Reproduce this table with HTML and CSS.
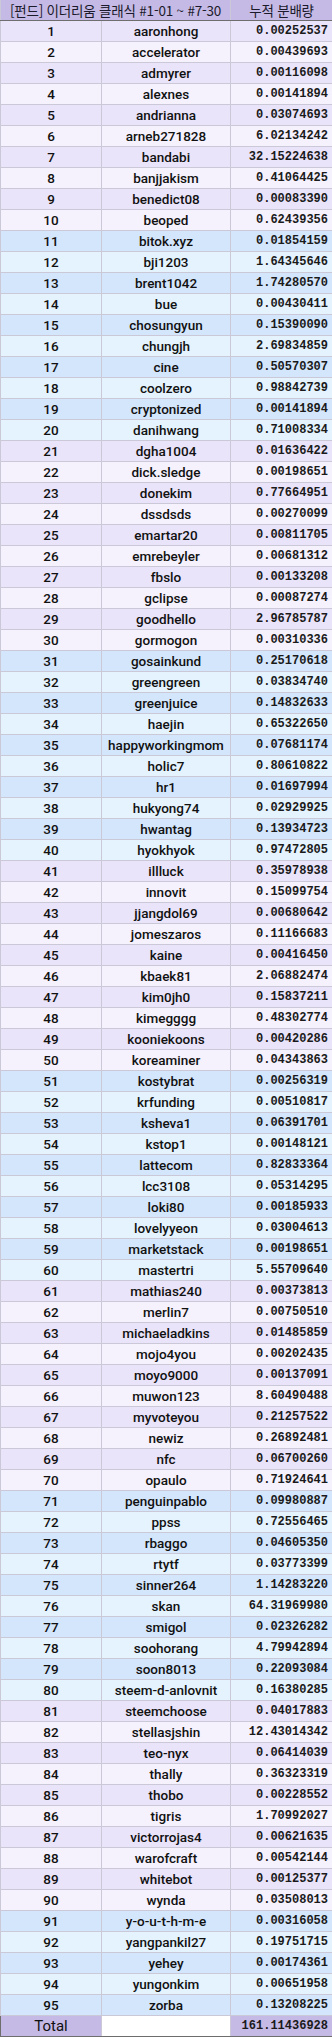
FILE: index.html
```html
<!DOCTYPE html>
<html lang="ko">
<head>
<meta charset="utf-8">
<title>이더리움 클래식 분배량</title>
<link rel="stylesheet" href="styles.css">
</head>
<body>
<table class="dist">
<colgroup><col class="c-no"><col class="c-name"><col class="c-amt"></colgroup>
<thead>
<tr class="head"><th colspan="2">[펀드] 이더리움 클래식 #1-01 ~ #7-30</th><th>누적 분배량</th></tr>
</thead>
<tbody class="purple">
<tr><td class="no">1</td><td class="name">aaronhong</td><td class="amt">0.00252537</td></tr>
<tr><td class="no">2</td><td class="name">accelerator</td><td class="amt">0.00439693</td></tr>
<tr><td class="no">3</td><td class="name">admyrer</td><td class="amt">0.00116098</td></tr>
<tr><td class="no">4</td><td class="name">alexnes</td><td class="amt">0.00141894</td></tr>
<tr><td class="no">5</td><td class="name">andrianna</td><td class="amt">0.03074693</td></tr>
<tr><td class="no">6</td><td class="name">arneb271828</td><td class="amt">6.02134242</td></tr>
<tr><td class="no">7</td><td class="name">bandabi</td><td class="amt">32.15224638</td></tr>
<tr><td class="no">8</td><td class="name">banjjakism</td><td class="amt">0.41064425</td></tr>
<tr><td class="no">9</td><td class="name">benedict08</td><td class="amt">0.00083390</td></tr>
<tr><td class="no">10</td><td class="name">beoped</td><td class="amt">0.62439356</td></tr>
</tbody>
<tbody class="blue">
<tr><td class="no">11</td><td class="name">bitok.xyz</td><td class="amt">0.01854159</td></tr>
<tr><td class="no">12</td><td class="name">bji1203</td><td class="amt">1.64345646</td></tr>
<tr><td class="no">13</td><td class="name">brent1042</td><td class="amt">1.74280570</td></tr>
<tr><td class="no">14</td><td class="name">bue</td><td class="amt">0.00430411</td></tr>
<tr><td class="no">15</td><td class="name">chosungyun</td><td class="amt">0.15390090</td></tr>
<tr><td class="no">16</td><td class="name">chungjh</td><td class="amt">2.69834859</td></tr>
<tr><td class="no">17</td><td class="name">cine</td><td class="amt">0.50570307</td></tr>
<tr><td class="no">18</td><td class="name">coolzero</td><td class="amt">0.98842739</td></tr>
<tr><td class="no">19</td><td class="name">cryptonized</td><td class="amt">0.00141894</td></tr>
<tr><td class="no">20</td><td class="name">danihwang</td><td class="amt">0.71008334</td></tr>
</tbody>
<tbody class="purple">
<tr><td class="no">21</td><td class="name">dgha1004</td><td class="amt">0.01636422</td></tr>
<tr><td class="no">22</td><td class="name">dick.sledge</td><td class="amt">0.00198651</td></tr>
<tr><td class="no">23</td><td class="name">donekim</td><td class="amt">0.77664951</td></tr>
<tr><td class="no">24</td><td class="name">dssdsds</td><td class="amt">0.00270099</td></tr>
<tr><td class="no">25</td><td class="name">emartar20</td><td class="amt">0.00811705</td></tr>
<tr><td class="no">26</td><td class="name">emrebeyler</td><td class="amt">0.00681312</td></tr>
<tr><td class="no">27</td><td class="name">fbslo</td><td class="amt">0.00133208</td></tr>
<tr><td class="no">28</td><td class="name">gclipse</td><td class="amt">0.00087274</td></tr>
<tr><td class="no">29</td><td class="name">goodhello</td><td class="amt">2.96785787</td></tr>
<tr><td class="no">30</td><td class="name">gormogon</td><td class="amt">0.00310336</td></tr>
</tbody>
<tbody class="blue">
<tr><td class="no">31</td><td class="name">gosainkund</td><td class="amt">0.25170618</td></tr>
<tr><td class="no">32</td><td class="name">greengreen</td><td class="amt">0.03834740</td></tr>
<tr><td class="no">33</td><td class="name">greenjuice</td><td class="amt">0.14832633</td></tr>
<tr><td class="no">34</td><td class="name">haejin</td><td class="amt">0.65322650</td></tr>
<tr><td class="no">35</td><td class="name">happyworkingmom</td><td class="amt">0.07681174</td></tr>
<tr><td class="no">36</td><td class="name">holic7</td><td class="amt">0.80610822</td></tr>
<tr><td class="no">37</td><td class="name">hr1</td><td class="amt">0.01697994</td></tr>
<tr><td class="no">38</td><td class="name">hukyong74</td><td class="amt">0.02929925</td></tr>
<tr><td class="no">39</td><td class="name">hwantag</td><td class="amt">0.13934723</td></tr>
<tr><td class="no">40</td><td class="name">hyokhyok</td><td class="amt">0.97472805</td></tr>
</tbody>
<tbody class="purple">
<tr><td class="no">41</td><td class="name">illluck</td><td class="amt">0.35978938</td></tr>
<tr><td class="no">42</td><td class="name">innovit</td><td class="amt">0.15099754</td></tr>
<tr><td class="no">43</td><td class="name">jjangdol69</td><td class="amt">0.00680642</td></tr>
<tr><td class="no">44</td><td class="name">jomeszaros</td><td class="amt">0.11166683</td></tr>
<tr><td class="no">45</td><td class="name">kaine</td><td class="amt">0.00416450</td></tr>
<tr><td class="no">46</td><td class="name">kbaek81</td><td class="amt">2.06882474</td></tr>
<tr><td class="no">47</td><td class="name">kim0jh0</td><td class="amt">0.15837211</td></tr>
<tr><td class="no">48</td><td class="name">kimegggg</td><td class="amt">0.48302774</td></tr>
<tr><td class="no">49</td><td class="name">kooniekoons</td><td class="amt">0.00420286</td></tr>
<tr><td class="no">50</td><td class="name">koreaminer</td><td class="amt">0.04343863</td></tr>
</tbody>
<tbody class="blue">
<tr><td class="no">51</td><td class="name">kostybrat</td><td class="amt">0.00256319</td></tr>
<tr><td class="no">52</td><td class="name">krfunding</td><td class="amt">0.00510817</td></tr>
<tr><td class="no">53</td><td class="name">ksheva1</td><td class="amt">0.06391701</td></tr>
<tr><td class="no">54</td><td class="name">kstop1</td><td class="amt">0.00148121</td></tr>
<tr><td class="no">55</td><td class="name">lattecom</td><td class="amt">0.82833364</td></tr>
<tr><td class="no">56</td><td class="name">lcc3108</td><td class="amt">0.05314295</td></tr>
<tr><td class="no">57</td><td class="name">loki80</td><td class="amt">0.00185933</td></tr>
<tr><td class="no">58</td><td class="name">lovelyyeon</td><td class="amt">0.03004613</td></tr>
<tr><td class="no">59</td><td class="name">marketstack</td><td class="amt">0.00198651</td></tr>
<tr><td class="no">60</td><td class="name">mastertri</td><td class="amt">5.55709640</td></tr>
</tbody>
<tbody class="purple">
<tr><td class="no">61</td><td class="name">mathias240</td><td class="amt">0.00373813</td></tr>
<tr><td class="no">62</td><td class="name">merlin7</td><td class="amt">0.00750510</td></tr>
<tr><td class="no">63</td><td class="name">michaeladkins</td><td class="amt">0.01485859</td></tr>
<tr><td class="no">64</td><td class="name">mojo4you</td><td class="amt">0.00202435</td></tr>
<tr><td class="no">65</td><td class="name">moyo9000</td><td class="amt">0.00137091</td></tr>
<tr><td class="no">66</td><td class="name">muwon123</td><td class="amt">8.60490488</td></tr>
<tr><td class="no">67</td><td class="name">myvoteyou</td><td class="amt">0.21257522</td></tr>
<tr><td class="no">68</td><td class="name">newiz</td><td class="amt">0.26892481</td></tr>
<tr><td class="no">69</td><td class="name">nfc</td><td class="amt">0.06700260</td></tr>
<tr><td class="no">70</td><td class="name">opaulo</td><td class="amt">0.71924641</td></tr>
</tbody>
<tbody class="blue">
<tr><td class="no">71</td><td class="name">penguinpablo</td><td class="amt">0.09980887</td></tr>
<tr><td class="no">72</td><td class="name">ppss</td><td class="amt">0.72556465</td></tr>
<tr><td class="no">73</td><td class="name">rbaggo</td><td class="amt">0.04605350</td></tr>
<tr><td class="no">74</td><td class="name">rtytf</td><td class="amt">0.03773399</td></tr>
<tr><td class="no">75</td><td class="name">sinner264</td><td class="amt">1.14283220</td></tr>
<tr><td class="no">76</td><td class="name">skan</td><td class="amt">64.31969980</td></tr>
<tr><td class="no">77</td><td class="name">smigol</td><td class="amt">0.02326282</td></tr>
<tr><td class="no">78</td><td class="name">soohorang</td><td class="amt">4.79942894</td></tr>
<tr><td class="no">79</td><td class="name">soon8013</td><td class="amt">0.22093084</td></tr>
<tr><td class="no">80</td><td class="name">steem-d-anlovnit</td><td class="amt">0.16380285</td></tr>
</tbody>
<tbody class="purple">
<tr><td class="no">81</td><td class="name">steemchoose</td><td class="amt">0.04017883</td></tr>
<tr><td class="no">82</td><td class="name">stellasjshin</td><td class="amt">12.43014342</td></tr>
<tr><td class="no">83</td><td class="name">teo-nyx</td><td class="amt">0.06414039</td></tr>
<tr><td class="no">84</td><td class="name">thally</td><td class="amt">0.36323319</td></tr>
<tr><td class="no">85</td><td class="name">thobo</td><td class="amt">0.00228552</td></tr>
<tr><td class="no">86</td><td class="name">tigris</td><td class="amt">1.70992027</td></tr>
<tr><td class="no">87</td><td class="name">victorrojas4</td><td class="amt">0.00621635</td></tr>
<tr><td class="no">88</td><td class="name">warofcraft</td><td class="amt">0.00542144</td></tr>
<tr><td class="no">89</td><td class="name">whitebot</td><td class="amt">0.00125377</td></tr>
<tr><td class="no">90</td><td class="name">wynda</td><td class="amt">0.03508013</td></tr>
</tbody>
<tbody class="blue">
<tr><td class="no">91</td><td class="name">y-o-u-t-h-m-e</td><td class="amt">0.00316058</td></tr>
<tr><td class="no">92</td><td class="name">yangpankil27</td><td class="amt">0.19751715</td></tr>
<tr><td class="no">93</td><td class="name">yehey</td><td class="amt">0.00174361</td></tr>
<tr><td class="no">94</td><td class="name">yungonkim</td><td class="amt">0.00651958</td></tr>
<tr><td class="no">95</td><td class="name">zorba</td><td class="amt">0.13208225</td></tr>
</tbody>
<tfoot>
<tr class="total"><td class="label">Total</td><td class="blank"></td><td class="amt">161.11436928</td></tr>
</tfoot>
</table>
</body>
</html>
```
FILE: styles.css
```css
html, body {
  margin: 0;
  padding: 0;
  background: #ffffff;
}

.dist {
  border-collapse: collapse;
  table-layout: fixed;
  width: 332px;
  border-left: 1px solid #6a6a6a;
  color: #111111;
}

.c-no { width: 101px; }
.c-name { width: 129px; }
.c-amt { width: 102px; }

.dist th,
.dist td {
  height: 20px;
  padding: 0;
  border: 1px solid #cbc8d8;
  line-height: 20px;
  white-space: nowrap;
  overflow: hidden;
}

.head th {
  background: #c5b9e5;
  font-family: "Noto Sans CJK KR", "Noto Sans", sans-serif;
  font-weight: 400;
  font-size: 13.5px;
  letter-spacing: -0.2px;
  color: #1a1a2a;
  text-align: center;
  border-top: none;
  border-bottom: 1px solid #6e6e6e;
  height: 20px;
}

.dist td.no,
.dist td.name {
  font-family: Roboto, "Liberation Sans", sans-serif;
  font-weight: 500;
  font-size: 13.5px;
  text-align: center;
}

.dist td.amt {
  font-family: "Liberation Mono", "DejaVu Sans Mono", monospace;
  font-size: 12px;
  font-weight: 700;
  text-align: right;
  padding-right: 4px;
  color: #1a1a1a;
}

.purple tr:nth-child(odd) td { background: #eae4fa; }
.purple tr:nth-child(even) td { background: #f5f1fd; }
.blue tr:nth-child(odd) td { background: #d4e6fc; }
.blue tr:nth-child(even) td { background: #e4f3fe; }

tbody tr:first-child td {
  border-top: 1px solid #6e6e6e;
}

.total td {
  border-top: 1px solid #6e6e6e;
  border-bottom: 1px solid #6e6e6e;
  border-left: 1px solid #6e6e6e;
  height: 20px;
}

.total td.label {
  background: #c5b9e5;
  font-family: Roboto, "Liberation Sans", sans-serif;
  font-size: 15px;
  text-align: center;
}

.total td.blank {
  background: #ffffff;
}

.total td.amt {
  background: #c5b9e5;
}
```
